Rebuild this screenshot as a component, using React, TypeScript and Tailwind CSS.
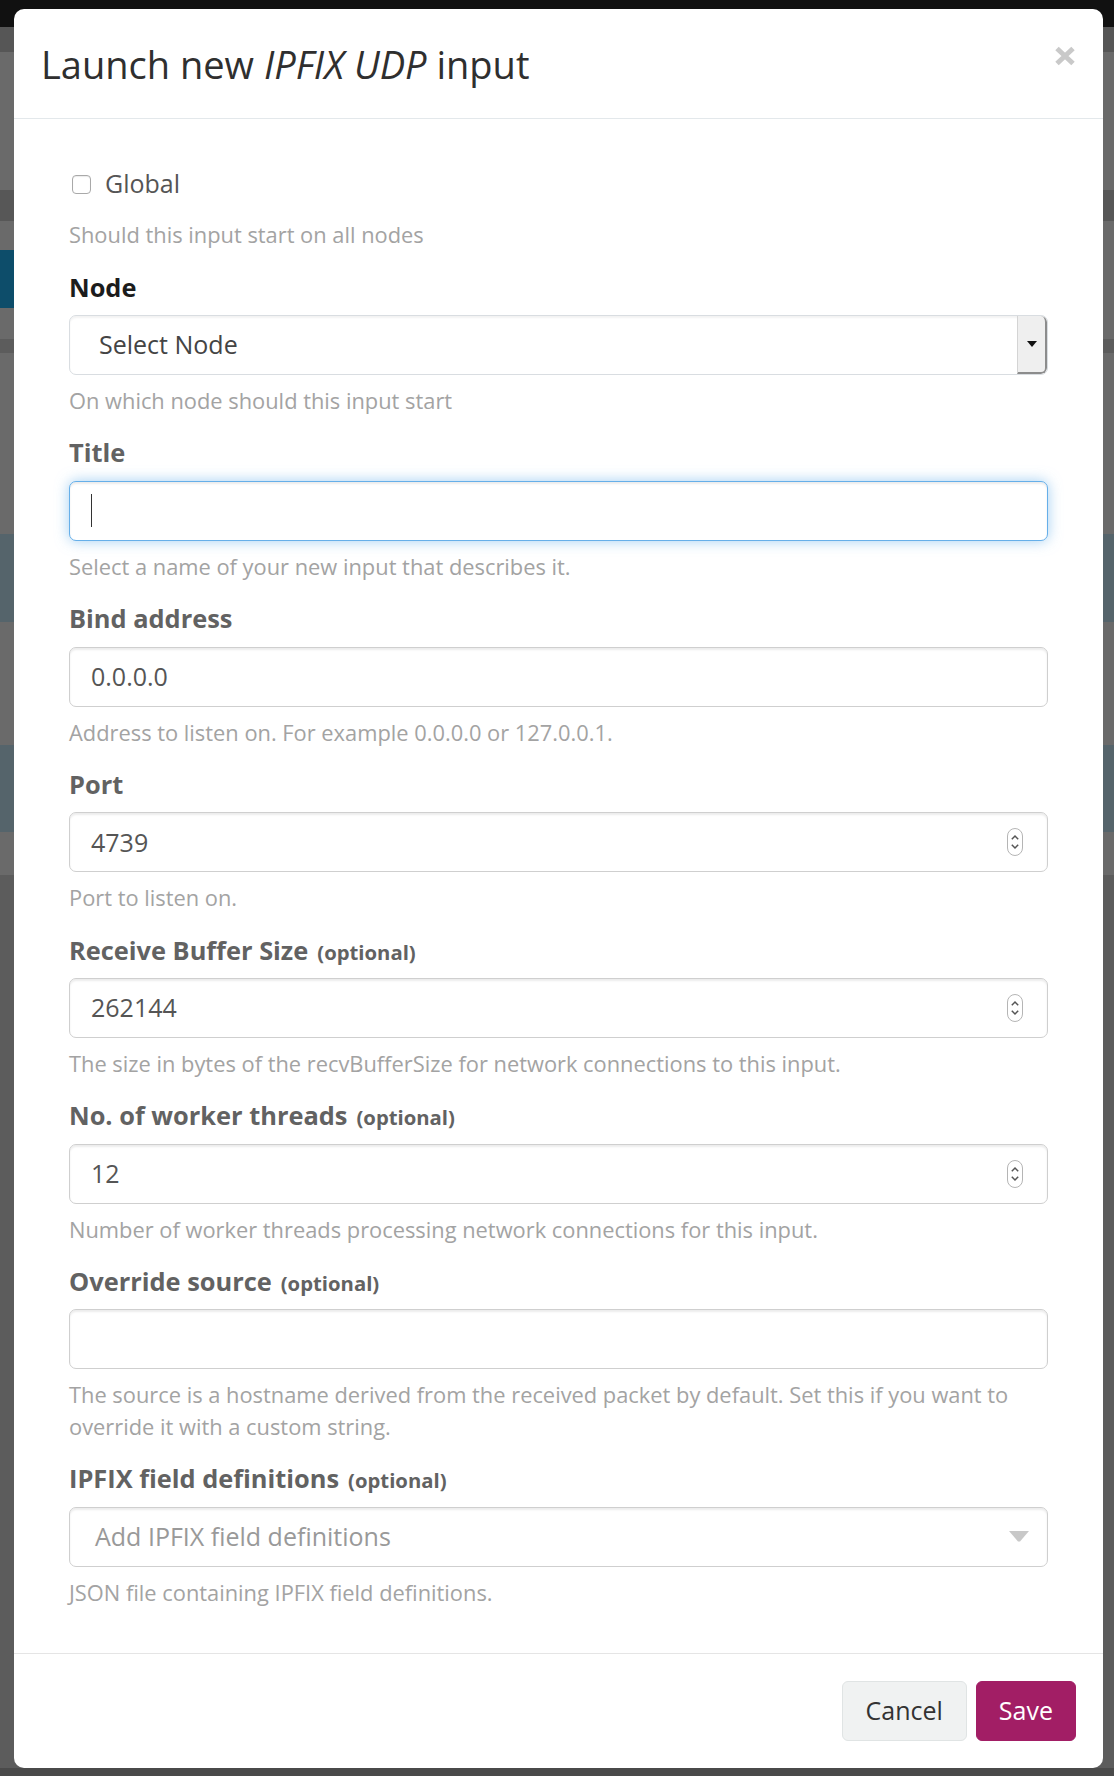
import React from "react";

const labelCls = "flex items-baseline h-[32px] leading-[32px] text-[25.4px] font-bold text-[#626262] mb-[12.5px]";
const helpCls = "mt-[10px] text-[21.85px] leading-[31.7px] text-[#a3a3a3]";
const inputBase =
  "flex items-center h-[60px] w-full rounded-[7px] border border-[#cfcfcf] bg-white shadow-[inset_0_2px_2px_rgba(0,0,0,0.075)] text-[25px] text-[#555]";

function Optional() {
  return <span className="ml-[9px] text-[20.3px] font-bold text-[#626262]">(optional)</span>;
}

function Spinner() {
  return (
    <svg width="16" height="28" viewBox="0 0 16 28" className="mr-[24px] shrink-0">
      <rect x="0.5" y="0.5" width="15" height="27" rx="7.5" fill="#fff" stroke="#b5b5b5" />
      <path d="M4.8 11.2 L8 8 L11.2 11.2" stroke="#555" strokeWidth="1.5" fill="none" />
      <path d="M4.8 16.8 L8 20 L11.2 16.8" stroke="#555" strokeWidth="1.5" fill="none" />
    </svg>
  );
}

function NumberField({ label, value, help }: { label: string; value: string; help: string }) {
  return (
    <div className="mb-[19.5px]">
      <div className={labelCls}>
        {label}
        <Optional />
      </div>
      <div className={inputBase + " justify-between"}>
        <span className="pl-[21px]">{value}</span>
        <Spinner />
      </div>
      <div className={helpCls}>{help}</div>
    </div>
  );
}

export default function App() {
  return (
    <div className="relative w-[1114px] h-[1776px] overflow-hidden bg-[#5c5c5c] font-['Open_Sans',sans-serif]">
      {/* dimmed background page */}
      <div className="flex flex-col w-full">
        <div className="h-[27px] bg-[#111111]" />
        <div className="h-[25px] bg-[#565656]" />
        <div className="h-[138px] bg-[#6a6a6a]" />
        <div className="h-[31px] bg-[#575757]" />
        <div className="h-[29px] bg-[#6a6a6a]" />
        <div className="flex h-[58px] bg-[#6a6a6a]">
          <div className="w-[14px] bg-[#0d4d6a]" />
        </div>
        <div className="h-[31px] bg-[#6a6a6a]" />
        <div className="h-[14px] bg-[#5c5c5c]" />
        <div className="h-[181px] bg-[#6a6a6a]" />
        <div className="h-[88px] bg-[#55646b]" />
        <div className="h-[123px] bg-[#6a6a6a]" />
        <div className="h-[87px] bg-[#55646b]" />
        <div className="h-[43px] bg-[#6a6a6a]" />
        <div className="h-[893px] bg-[#5c5c5c]" />
        <div className="h-[8px] bg-[#4a4a4a]" />
      </div>

      {/* modal */}
      <div className="absolute left-[14px] top-[9px] w-[1089px] h-[1759px] rounded-[10px] bg-white flex flex-col overflow-hidden">
        {/* header */}
        <div className="flex items-center justify-between h-[110px] border-b border-[#e3e8eb] pl-[27px] pr-[27px] shrink-0">
          <h4 className="text-[38px] leading-none text-[#2f2f2f] font-normal">
            Launch new <em>IPFIX UDP</em> input
          </h4>
          <svg width="22" height="20" viewBox="0 0 22 20" className="self-start mt-[37px]">
            <path d="M3 2.5 L19 17.5 M19 2.5 L3 17.5" stroke="#c9c9c9" strokeWidth="5" strokeLinecap="butt" />
          </svg>
        </div>

        {/* body */}
        <div className="flex-1 px-[55px] pt-[48px]">
          <div className="flex items-center h-[34px]">
            <div className="ml-[3px] w-[19px] h-[19px] rounded-[4px] border border-[#a9a9a9] bg-white shadow-[inset_0_1px_1px_rgba(0,0,0,0.08)]" />
            <span className="ml-[14px] text-[25px] text-[#555]">Global</span>
          </div>
          <div className="mt-[18px] mb-[20px] text-[21.85px] leading-[31.7px] text-[#a3a3a3]">
            Should this input start on all nodes
          </div>

          {/* Node */}
          <div className="mb-[19.5px]">
            <div className={labelCls + " !text-[#1c1c1c]"}>Node</div>
            <div className="flex h-[60px] w-full rounded-[7px] border border-[#d9dde1] bg-white shadow-[inset_0_2px_2px_rgba(0,0,0,0.05)] overflow-hidden">
              <div className="flex-1 flex items-center pl-[29px] text-[25px] text-[#444]">Select Node</div>
              <div className="w-[30px] flex items-center justify-center bg-[#efefef] border-l border-[#d4d4d4] border-r-2 border-b-2 border-r-[#8c8c8c] border-b-[#8c8c8c] rounded-r-[6px]">
                <svg width="10" height="6" viewBox="0 0 10 6">
                  <path d="M0 0 L10 0 L5 6 Z" fill="#111" />
                </svg>
              </div>
            </div>
            <div className={helpCls}>On which node should this input start</div>
          </div>

          {/* Title */}
          <div className="mb-[19.5px]">
            <div className={labelCls}>Title</div>
            <div className="flex items-center h-[60px] w-full rounded-[7px] border border-[#66afe9] bg-white shadow-[inset_0_2px_2px_rgba(0,0,0,0.075),0_0_14px_rgba(102,175,233,0.6)]">
              <div className="ml-[21px] w-px h-[33px] bg-[#333]" />
            </div>
            <div className={helpCls}>Select a name of your new input that describes it.</div>
          </div>

          {/* Bind address */}
          <div className="mb-[19.5px]">
            <div className={labelCls}>Bind address</div>
            <div className={inputBase}>
              <span className="pl-[21px]">0.0.0.0</span>
            </div>
            <div className={helpCls}>Address to listen on. For example 0.0.0.0 or 127.0.0.1.</div>
          </div>

          {/* Port */}
          <div className="mb-[19.5px]">
            <div className={labelCls}>Port</div>
            <div className={inputBase + " justify-between"}>
              <span className="pl-[21px]">4739</span>
              <Spinner />
            </div>
            <div className={helpCls}>Port to listen on.</div>
          </div>

          <NumberField
            label="Receive Buffer Size"
            value="262144"
            help="The size in bytes of the recvBufferSize for network connections to this input."
          />
          <NumberField
            label="No. of worker threads"
            value="12"
            help="Number of worker threads processing network connections for this input."
          />

          {/* Override source */}
          <div className="mb-[19.5px]">
            <div className={labelCls}>
              Override source
              <Optional />
            </div>
            <div className={inputBase} />
            <div className={helpCls}>
              The source is a hostname derived from the received packet by default. Set this if you want to
              <br />
              override it with a custom string.
            </div>
          </div>

          {/* IPFIX field definitions */}
          <div>
            <div className={labelCls}>
              IPFIX field definitions
              <Optional />
            </div>
            <div className={inputBase + " justify-between"}>
              <span className="pl-[25px] text-[#999]">Add IPFIX field definitions</span>
              <svg width="20" height="11" viewBox="0 0 20 11" className="mr-[18px]">
                <path d="M0 0 L20 0 L11 10.5 L9 10.5 Z" fill="#c8c8c8" />
              </svg>
            </div>
            <div className={helpCls}>JSON file containing IPFIX field definitions.</div>
          </div>
        </div>

        {/* footer */}
        <div className="shrink-0 flex justify-end gap-[9px] border-t border-[#e5e5e5] px-[27px] pt-[27px] pb-[27px]">
          <button className="h-[60px] px-[23px] rounded-[6px] border border-[#e0e4e4] bg-[#f0f2f2] text-[25px] text-[#333]">
            Cancel
          </button>
          <button className="h-[60px] px-[22px] rounded-[6px] border border-[#a21e65] bg-[#a21e65] text-[25px] text-white">
            Save
          </button>
        </div>
      </div>
    </div>
  );
}
